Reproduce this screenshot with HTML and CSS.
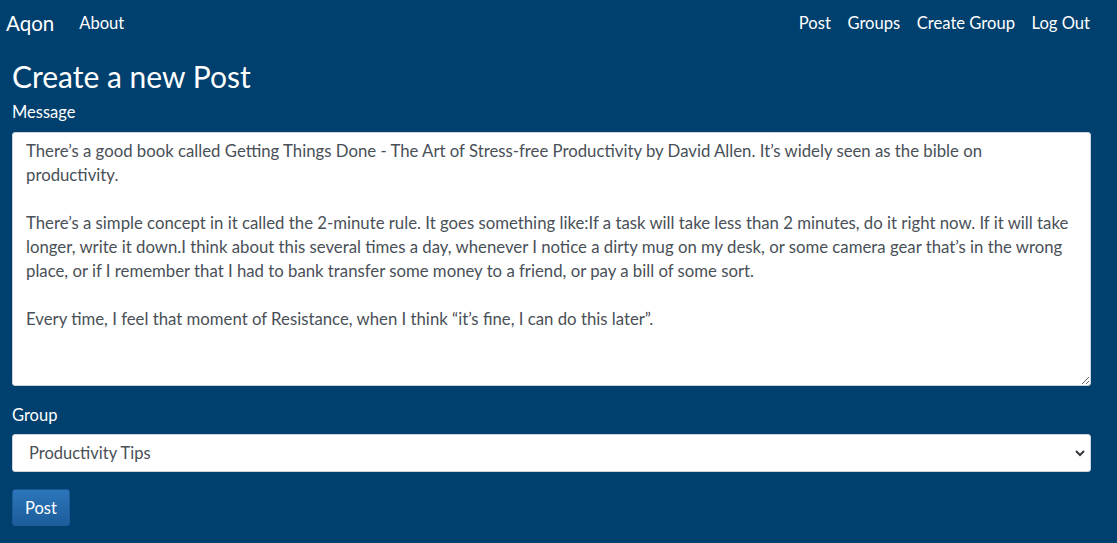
FILE: index.html
```html
<!DOCTYPE html>
<html>
<head>
<meta charset="utf-8">
<link rel="stylesheet" href="styles.css">
</head>
<body>
<nav class="navbar">
  <div class="nav-left">
    <a class="brand" href="#">Aqon</a>
    <a class="nav-link" href="#">About</a>
  </div>
  <div class="nav-right">
    <a class="nav-link" href="#">Post</a>
    <a class="nav-link" href="#">Groups</a>
    <a class="nav-link" href="#">Create Group</a>
    <a class="nav-link" href="#">Log Out</a>
  </div>
</nav>
<main class="container">
  <h1 class="title">Create a new Post</h1>
  <form class="form">
    <label class="label" for="msg">Message</label>
    <textarea id="msg" class="textarea">There’s a good book called Getting Things Done - The Art of Stress-free Productivity by David Allen. It’s widely seen as the bible on productivity.

There’s a simple concept in it called the 2-minute rule. It goes something like:If a task will take less than 2 minutes, do it right now. If it will take longer, write it down.I think about this several times a day, whenever I notice a dirty mug on my desk, or some camera gear that’s in the wrong place, or if I remember that I had to bank transfer some money to a friend, or pay a bill of some sort.

Every time, I feel that moment of Resistance, when I think “it’s fine, I can do this later”.</textarea>
    <label class="label label-group" for="grp">Group</label>
    <div class="select-wrap">
      <select id="grp" class="select">
        <option>Productivity Tips</option>
      </select>
      <svg class="chev" width="10" height="8" viewBox="0 0 10 8"><path d="M1 2 L5 6 L9 2" fill="none" stroke="#343a40" stroke-width="2"/></svg>
    </div>
    <button type="button" class="btn">Post</button>
  </form>
</main>
</body>
</html>
```
FILE: styles.css
```css
* { box-sizing: border-box; }
html, body { margin: 0; padding: 0; }
body {
  background: #00406e;
  font-family: "Lato", "Open Sans", sans-serif;
  color: #fff;
  height: 543px;
  overflow: hidden;
}
.navbar {
  display: flex;
  justify-content: space-between;
  align-items: center;
  height: 46px;
  padding: 0 27px 0 6px;
}
.nav-left, .nav-right { display: flex; align-items: center; }
.nav-right { gap: 16.5px; }
.brand {
  color: #fff;
  text-decoration: none;
  font-size: 20.5px;
  margin-right: 25px;
}
.nav-link {
  color: #fff;
  text-decoration: none;
  font-size: 16.6px;
}
.container { padding: 0 26px 0 12px; }
.title {
  font-weight: 400;
  font-size: 30px;
  margin: 14px 0 10px;
  line-height: 32px;
}
.form { display: flex; flex-direction: column; align-items: stretch; }
.label { font-size: 16.5px; line-height: 20px; margin-bottom: 10px; }
.label-group { margin-top: 19px; margin-bottom: 9px; }
.textarea {
  height: 254px;
  width: 100%;
  border: 1px solid #ced4da;
  border-radius: 3px;
  background: #fff;
  color: #495057;
  font-family: inherit;
  font-size: 16.75px;
  line-height: 24px;
  padding: 6px 13px;
  resize: vertical;
}
.select-wrap { position: relative; }
.select {
  appearance: none;
  -webkit-appearance: none;
  width: 100%;
  height: 38px;
  border: 1px solid #ced4da;
  border-radius: 3px;
  background: #fff;
  color: #495057;
  font-family: inherit;
  font-size: 16.5px;
  padding: 0 16px;
}
.chev { position: absolute; right: 6px; top: 15px; pointer-events: none; }
.btn {
  align-self: flex-start;
  margin-top: 17px;
  width: 58px;
  height: 37px;
  border: 1px solid #1b5a96;
  border-radius: 3px;
  background: linear-gradient(#2c76bb, #1c5d9b);
  color: #fff;
  font-family: inherit;
  font-size: 16.5px;
}
```
